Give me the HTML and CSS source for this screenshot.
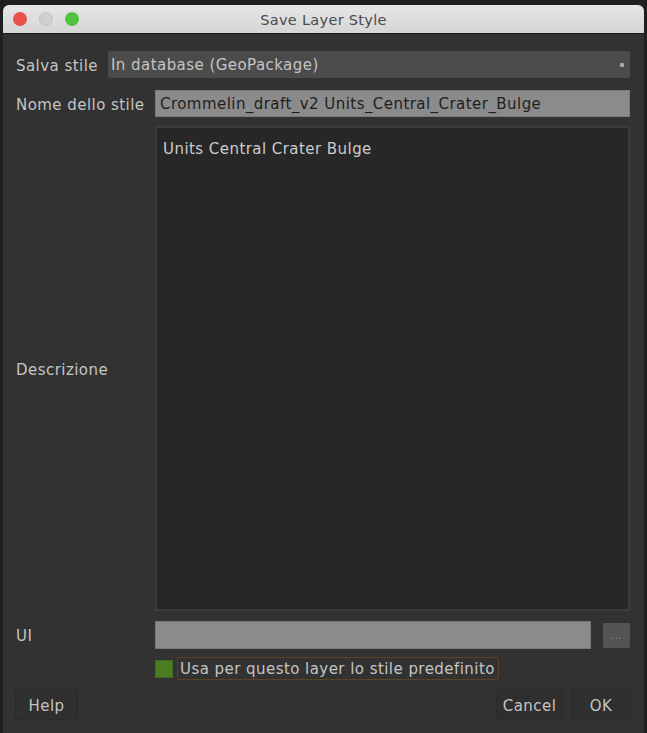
FILE: index.html
```html
<!DOCTYPE html>
<html>
<head>
<meta charset="utf-8">
<link rel="stylesheet" href="styles.css">
</head>
<body>
<div class="window">
  <div class="titlebar">
    <div class="lights">
      <span class="light red"></span>
      <span class="light gray"></span>
      <span class="light green"></span>
    </div>
    <div class="title">Save Layer Style</div>
  </div>
  <div class="content">
    <div class="row row-combo">
      <div class="label label-short">Salva stile</div>
      <div class="combo"><span>In database (GeoPackage)</span><span class="arrow"></span></div>
    </div>
    <div class="row row-name">
      <div class="label">Nome dello stile</div>
      <div class="input light-input">Crommelin_draft_v2 Units_Central_Crater_Bulge</div>
    </div>
    <div class="row row-desc">
      <div class="label">Descrizione</div>
      <div class="textarea">Units Central Crater Bulge</div>
    </div>
    <div class="row row-ui">
      <div class="label">UI</div>
      <div class="input light-input ui-input"></div>
      <div class="dots">...</div>
    </div>
    <div class="row row-check">
      <div class="label"></div>
      <div class="check"></div>
      <div class="check-label">Usa per questo layer lo stile predefinito</div>
    </div>
    <div class="buttons">
      <div class="btn btn-help">Help</div>
      <div class="spacer"></div>
      <div class="btn btn-cancel">Cancel</div>
      <div class="btn btn-ok">OK</div>
    </div>
  </div>
</div>
</body>
</html>
```
FILE: styles.css
```css
html, body {
  margin: 0;
  padding: 0;
  background: #1f1f1f;
  width: 647px;
  height: 733px;
  overflow: hidden;
  font-family: "DejaVu Sans", "Liberation Sans", sans-serif;
  font-size: 15px;
  letter-spacing: 0.45px;
}
.window {
  margin: 5px 0 0 3px;
  width: 641px;
  height: 728px;
  background: #323232;
  border-radius: 6px 6px 0 0;
  overflow: hidden;
  display: flex;
  flex-direction: column;
}
.titlebar {
  height: 28px;
  background: linear-gradient(#e6e6e6, #d6d6d6);
  border-bottom: 1px solid #1c1c1c;
  position: relative;
  display: flex;
  align-items: center;
}
.lights {
  display: flex;
  gap: 12px;
  padding-left: 10px;
}
.light {
  width: 14px;
  height: 14px;
  border-radius: 50%;
  display: block;
}
.light.red { background: #e9504a; }
.light.gray { background: #d0d0d0; border: 1px solid #c2c2c2; box-sizing: border-box; }
.light.green { background: #4fc43d; }
.title {
  position: absolute;
  left: 0;
  right: 0;
  text-align: center;
  color: #4a4a4a;
  font-size: 14.5px;
  letter-spacing: 0.3px;
  top: 7px;
}
.content {
  flex: 1;
  display: flex;
  flex-direction: column;
  padding: 17px 14px 0 13px;
}
.row {
  display: flex;
  align-items: center;
}
.label {
  width: 139px;
  flex: none;
  color: #c4c4c4;
  padding-top: 2px;
}
.label-short {
  width: 92px;
}
.combo {
  flex: 1;
  height: 27px;
  background: #4b4b4b;
  border-radius: 2px;
  display: flex;
  align-items: center;
  justify-content: space-between;
  padding: 1px 6px 0 3px;
  color: #c4c4c4;
  box-sizing: border-box;
}
.arrow {
  width: 4px;
  height: 4px;
  background: #a8a8a8;
  border-radius: 1px;
}
.row-name {
  margin-top: 12px;
}
.input {
  flex: 1;
  height: 27px;
  box-sizing: border-box;
  display: flex;
  align-items: center;
  padding: 1px 0 0 4px;
}
.light-input {
  background: #8b8b8b;
  border: 1px solid #7a7a7a;
  color: #1e1e1e;
}
.row-desc {
  margin-top: 9px;
  height: 485px;
  align-items: stretch;
}
.row-desc .label {
  align-self: center;
}
.textarea {
  flex: 1;
  background: #272727;
  border: 2px solid #3b3b3b;
  color: #cccccc;
  padding: 12px 6px;
  box-sizing: border-box;
}
.row-ui {
  margin-top: 10px;
}
.ui-input {
  height: 28px;
  flex: none;
  width: 436px;
}
.dots {
  margin-left: 12px;
  width: 27px;
  height: 25px;
  background: #535353;
  color: #888;
  font-size: 10px;
  display: flex;
  align-items: center;
  justify-content: center;
  border-radius: 1px;
}
.row-check {
  margin-top: 8px;
  height: 23px;
}
.check {
  width: 18px;
  height: 18px;
  background: #4d7d22;
  border: 1px solid #3f6b18;
  box-sizing: border-box;
  flex: none;
}
.check-label {
  margin-left: 4px;
  height: 23px;
  box-sizing: border-box;
  border: 1px solid #5a4424;
  border-radius: 2px;
  padding: 1px 3px 0 2px;
  display: flex;
  align-items: center;
  color: #c4c4c4;
}
.buttons {
  margin-top: 9px;
  display: flex;
  align-items: center;
}
.spacer { flex: 1; }
.btn {
  height: 31px;
  box-sizing: border-box;
  border: 1px solid #2a2a2a;
  background: #2f2f2f;
  border-radius: 2px;
  color: #c4c4c4;
  display: flex;
  align-items: center;
  justify-content: center;
  padding-top: 2px;
}
.btn-help { width: 63px; margin-left: -1px; }
.btn-cancel { width: 67px; }
.btn-ok { width: 60px; margin-left: 8px; margin-right: -1px; }
```
